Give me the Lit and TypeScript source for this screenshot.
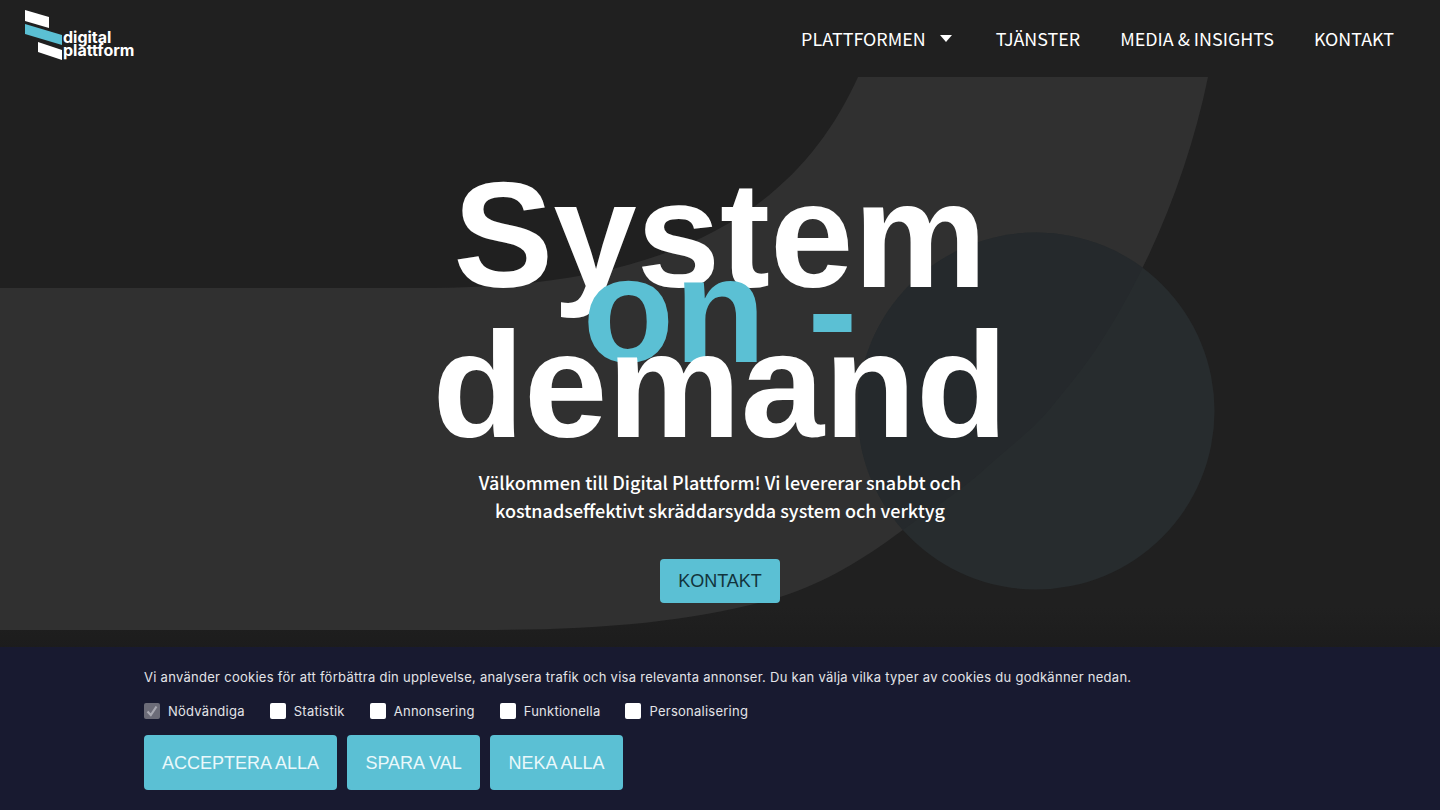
import { LitElement, html, css, svg } from "lit";
import { customElement } from "lit/decorators.js";

const SHAPE =
  "M858 77 C800 205 680 288 430 288 L0 288 L0 630 L480 630 C600 630 695 622 780 597 C825 583 865 558 900 532 C930 510 960 492 987 467 C1015 442 1035 428 1053 405 C1075 378 1090 360 1107 332 C1155 255 1190 165 1208 77 Z";

@customElement("app-root")
export class AppRoot extends LitElement {
  static styles = css`
    :host { display: block; width: 100%; height: 810px; overflow: hidden; position: relative; background: #202020; color: #fff; font-family: "Liberation Sans", Arial, sans-serif; }
    .bg { position: absolute; inset: 0; width: 100%; height: 100%; }
    .page { position: relative; display: flex; flex-direction: column; height: 100%; }
    header { height: 77px; flex: none; display: flex; justify-content: space-between; align-items: flex-start; padding: 0 46px 0 25px; }
    .logo { display: flex; width: 110px; height: 60px; margin-top: 10px; position: relative; }
    .logo svg { position: absolute; left: 0; top: 0; }
    .wordmark { position: absolute; left: 38px; top: 21px; font: 700 16px/13px Inter, sans-serif; color: #fff; }
    nav { display: flex; gap: 40px; align-items: center; height: 77px; font: 400 17.9px/1 "Noto Sans CJK SC", "Noto Sans", sans-serif; }
    nav a { display: flex; align-items: center; gap: 14px; }
    .caret { width: 0; height: 0; border: 6.5px solid transparent; border-top: 7px solid #fff; border-bottom: 0; margin-right: 4px; }
    main { flex: 1; display: flex; flex-direction: column; align-items: center; padding-top: 121px; }
    h1 { margin: 0; font: 700 150px/75px "Liberation Sans", Arial, sans-serif; text-align: center; color: #fff; }
    h1 span { display: block; }
    h1 .on { color: #5bc0d4; }
    .sub { margin: 45px 0 0; width: 560px; text-align: center; font: 500 18px/28px "Noto Sans CJK SC", "Noto Sans", sans-serif; }
    .btn { background: #5bc0d4; border: 0; border-radius: 4px; font: 400 18px/1 "Liberation Sans", Arial, sans-serif; padding: 0 18px; }
    .cta { margin-top: 35px; height: 44px; color: #12343d; }
    .cookies { position: absolute; left: 0; right: 0; bottom: 0; height: 163px; box-sizing: border-box; padding: 21px 144px 0; background: #181a30; font: 400 13px/18px Inter, sans-serif; color: #e3e4e8; }
    .msg { margin: 0; letter-spacing: 0.275px; }
    .checks { display: flex; gap: 25px; margin-top: 16px; }
    label { display: flex; align-items: center; gap: 8px; height: 18px; letter-spacing: 0.25px; }
    .box { width: 16px; height: 16px; background: #fff; border-radius: 2px; display: block; }
    .box.on { background: #6c6c78; }
    .box svg { display: block; }
    .actions { display: flex; gap: 10px; margin-top: 15px; }
    .actions .btn { height: 55px; min-width: 133px; color: #eaf8fb; }
  `;

  render() {
    const checks = ["Statistik", "Annonsering", "Funktionella", "Personalisering"];
    return html`
      <svg class="bg" viewBox="0 0 1440 810" aria-hidden="true">
        <defs>
          <linearGradient id="fade" x1="0" y1="0" x2="0" y2="1">
            <stop offset="0.75" stop-color="#202020" /><stop offset="0.8" stop-color="#1c1c1c" />
          </linearGradient>
          <clipPath id="shape-clip">${svg`<path d=${SHAPE} />`}</clipPath>
        </defs>
        <rect width="1440" height="810" fill="url(#fade)" />
        ${svg`<path fill="#303030" d=${SHAPE} />`}
        <circle cx="1036" cy="411" r="178.5" fill="#272c2e" />
        <circle cx="1036" cy="411" r="178.5" fill="#25292c" clip-path="url(#shape-clip)" />
      </svg>
      <div class="page">
        <header>
          <div class="logo">
            <svg width="40" height="52" viewBox="0 0 40 52">
              <polygon fill="#fff" points="0,0 24,7 24,18 0,11" />
              <polygon fill="#5bc0d4" points="0,14 37,25 37,35 0,24" />
              <polygon fill="#fff" points="13,32 37,40 37,50 13,42" />
            </svg>
            <div class="wordmark">digital<br />plattform</div>
          </div>
          <nav>
            <a>PLATTFORMEN <i class="caret"></i></a>
            <a>TJÄNSTER</a>
            <a>MEDIA &amp; INSIGHTS</a>
            <a>KONTAKT</a>
          </nav>
        </header>
        <main>
          <h1><span>System</span><span class="on">on -</span><span>demand</span></h1>
          <p class="sub">Välkommen till Digital Plattform! Vi levererar snabbt och kostnadseffektivt skräddarsydda system och verktyg</p>
          <button class="btn cta">KONTAKT</button>
        </main>
      </div>
      <section class="cookies">
        <p class="msg">Vi använder cookies för att förbättra din upplevelse, analysera trafik och visa relevanta annonser. Du kan välja vilka typer av cookies du godkänner nedan.</p>
        <div class="checks">
          <label><span class="box on"><svg width="16" height="16" viewBox="0 0 16 16"><path d="M3.5 8.5 L6.8 12 L12.5 3.5" fill="none" stroke="#a9a9b2" stroke-width="2.2" /></svg></span>Nödvändiga</label>
          ${checks.map((c) => html`<label><span class="box"></span>${c}</label>`)}
        </div>
        <div class="actions">
          <button class="btn">ACCEPTERA ALLA</button>
          <button class="btn">SPARA VAL</button>
          <button class="btn">NEKA ALLA</button>
        </div>
      </section>
    `;
  }
}
